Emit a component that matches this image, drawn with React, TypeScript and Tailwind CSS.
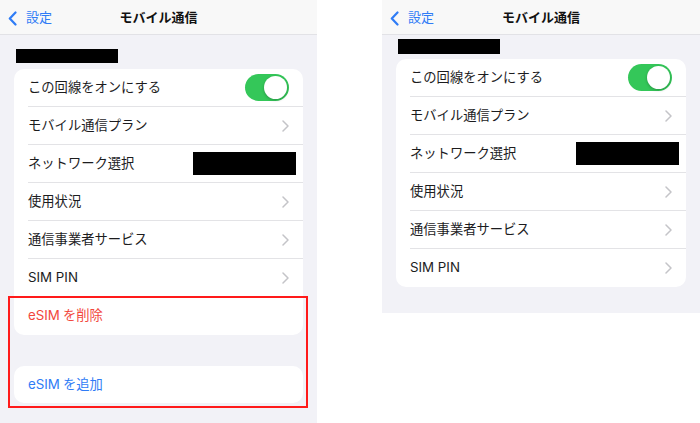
import React from 'react';

const font = { fontFamily: '"Inter", "Noto Sans CJK JP", sans-serif' };

function Chevron() {
  return (
    <svg width="7" height="12" viewBox="0 0 7 12" className="shrink-0">
      <path d="M1 1l5 5-5 5" fill="none" stroke="#c4c4c8" strokeWidth="1.5" strokeLinecap="round" strokeLinejoin="round" />
    </svg>
  );
}

function Toggle() {
  return (
    <div className="w-[44px] h-[27px] rounded-full bg-[#34c759] p-[2px] flex justify-end">
      <div className="w-[23px] h-[23px] rounded-full bg-white shadow-[0_1px_3px_rgba(0,0,0,0.25)]" />
    </div>
  );
}

function Header() {
  return (
    <div className="h-[35px] pt-[2px] bg-[#f8f8f8] border-b border-[#e2e2e6] flex items-center relative">
      <div className="flex items-center gap-[9px] pl-[8px] text-[#2f7cf6] text-[13px]">
        <svg width="9" height="15" viewBox="0 0 9 15">
          <path d="M7.5 1.5L1.8 7.5l5.7 6" fill="none" stroke="#2f7cf6" strokeWidth="2.2" strokeLinecap="round" strokeLinejoin="round" />
        </svg>
        <span>設定</span>
      </div>
      <div className="absolute inset-0 pt-[2px] flex items-center justify-center text-[13px] font-bold text-[#111] pointer-events-none">
        モバイル通信
      </div>
    </div>
  );
}

type Row = { label: string; right: 'toggle' | 'chevron' | 'redacted' };

const rows: Row[] = [
  { label: 'この回線をオンにする', right: 'toggle' },
  { label: 'モバイル通信プラン', right: 'chevron' },
  { label: 'ネットワーク選択', right: 'redacted' },
  { label: '使用状況', right: 'chevron' },
  { label: '通信事業者サービス', right: 'chevron' },
  { label: 'SIM PIN', right: 'chevron' },
];

function SettingsCard({ roundedBottom = true }: { roundedBottom?: boolean }) {
  return (
    <div className={`bg-white mx-[14px] ${roundedBottom ? 'rounded-[10px]' : 'rounded-t-[10px]'}`}>
      {rows.map((row, i) => (
        <div key={row.label} className="pl-[14px]">
          <div
            className={`h-[38px] flex items-center justify-between pr-[14px] ${
              i < rows.length - 1 ? 'border-b border-[#e3e3e6]' : ''
            }`}
          >
            <span className="text-[13.3px] text-[#1c1c1e]">{row.label}</span>
            {row.right === 'toggle' && <Toggle />}
            {row.right === 'chevron' && <Chevron />}
            {row.right === 'redacted' && <div className="w-[103px] h-[23px] bg-black -mr-[7px]" />}
          </div>
        </div>
      ))}
    </div>
  );
}

export default function App() {
  return (
    <div className="w-[700px] h-[423px] bg-white flex overflow-hidden" style={font}>
      {/* Left screenshot */}
      <div className="w-[317px] h-full bg-[#f2f2f7] relative">
        <Header />
        <div className="ml-[16px] mt-[14px] w-[102px] h-[14px] bg-black" />
        <div className="mt-[6px]">
          <SettingsCard roundedBottom={false} />
        </div>
        <div className="bg-white mx-[14px] rounded-b-[10px] h-[38px] flex items-center pl-[14px] text-[13.3px] text-[#f2473d]">
          <span className="mr-[3px]">eSIM</span>を削除
        </div>
        <div className="bg-white mx-[14px] mt-[31px] rounded-[10px] h-[37px] flex items-center pl-[14px] text-[13.3px] text-[#2f7cf6]">
          <span className="mr-[3px]">eSIM</span>を追加
        </div>
        {/* annotation box */}
        <div className="absolute left-[8px] top-[296px] w-[300px] h-[112px] border-2 border-[#ff1a1a] pointer-events-none" />
      </div>

      {/* Right screenshot */}
      <div className="ml-[65px] w-[318px] h-[313px] bg-[#f2f2f7]">
        <Header />
        <div className="ml-[16px] mt-[4px] w-[102px] h-[15px] bg-black" />
        <div className="mt-[5px]">
          <SettingsCard />
        </div>
      </div>
    </div>
  );
}
